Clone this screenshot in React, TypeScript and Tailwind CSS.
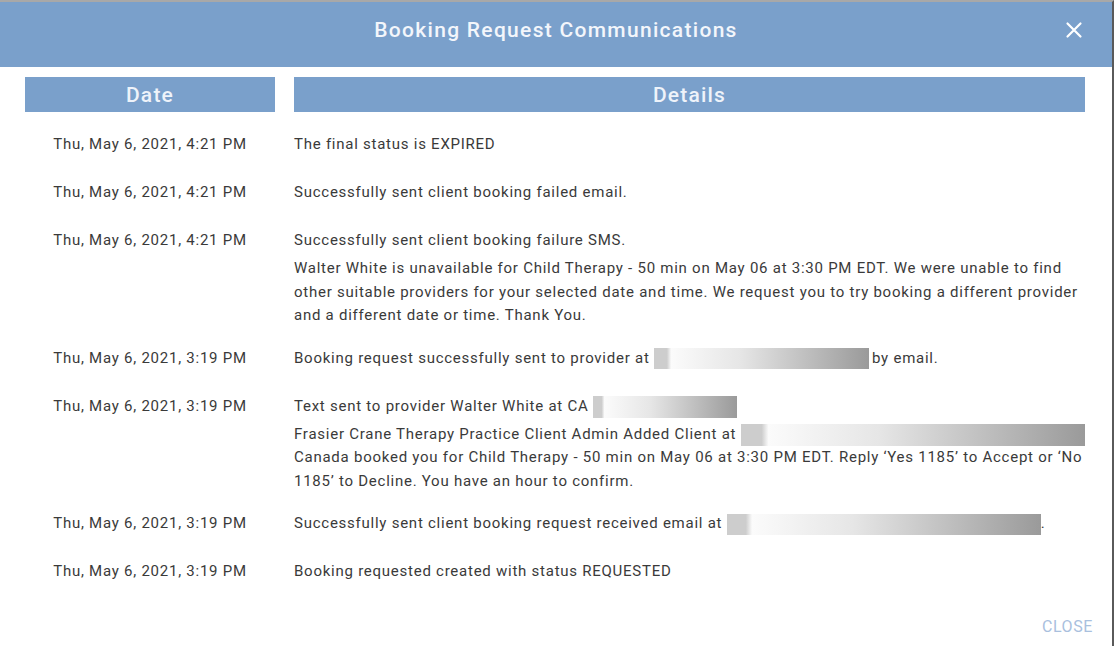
import { JSX } from 'react'

type Row = {
  date: string
  detail: JSX.Element | string
  extra?: JSX.Element
}

function Redacted({ width, height = 21 }: { width: number; height?: number }): JSX.Element {
  return (
    <span
      className="inline-block align-middle bg-[linear-gradient(90deg,#cdcdcd_0%,#cdcdcd_6%,#fbfbfb_8%,#e6e6e6_40%,#9a9a9a_100%)]"
      style={{ width, height }}
    />
  )
}

const rows: Row[] = [
  { date: 'Thu, May 6, 2021, 4:21 PM', detail: 'The final status is EXPIRED' },
  { date: 'Thu, May 6, 2021, 4:21 PM', detail: 'Successfully sent client booking failed email.' },
  {
    date: 'Thu, May 6, 2021, 4:21 PM',
    detail: 'Successfully sent client booking failure SMS.',
    extra: (
      <>
        Walter White is unavailable for Child Therapy - 50 min on May 06 at 3:30 PM EDT. We were unable to find
        <br />
        other suitable providers for your selected date and time. We request you to try booking a different provider
        <br />
        and a different date or time. Thank You.
      </>
    )
  },
  {
    date: 'Thu, May 6, 2021, 3:19 PM',
    detail: (
      <>
        Booking request successfully sent to provider at <Redacted width={215} />
        <span className="ml-[3px]">by email.</span>
      </>
    )
  },
  {
    date: 'Thu, May 6, 2021, 3:19 PM',
    detail: (
      <>
        Text sent to provider Walter White at CA <Redacted width={144} height={22} />
      </>
    ),
    extra: (
      <>
        Frasier Crane Therapy Practice Client Admin Added Client at <Redacted width={344} height={22} />
        <br />
        Canada booked you for Child Therapy - 50 min on May 06 at 3:30 PM EDT. Reply ‘Yes 1185’ to Accept or ‘No
        <br />
        1185’ to Decline. You have an hour to confirm.
      </>
    )
  },
  {
    date: 'Thu, May 6, 2021, 3:19 PM',
    detail: (
      <>
        Successfully sent client booking request received email at <Redacted width={314} />.
      </>
    )
  },
  { date: 'Thu, May 6, 2021, 3:19 PM', detail: 'Booking requested created with status REQUESTED' }
]

export default function App(): JSX.Element {
  return (
    <div className="w-[1115px] h-[646px] bg-white overflow-hidden font-['Roboto',_'Liberation_Sans',_sans-serif]">
      <div className="w-[1114px] h-full flex flex-col border-t-2 border-t-[#a8a8a8] border-r-2 border-r-[#5a5a5a]">
        <div className="relative h-[65px] shrink-0 bg-[#7aa0cb] flex items-center justify-center pb-[7px]">
          <h1 className="text-[21px] font-medium text-[#f3f6fb] tracking-[1.3px]">Booking Request Communications</h1>
          <button className="absolute right-[29px] top-[19px] text-white" aria-label="Close">
            <svg width="18" height="18" viewBox="0 0 18 18" fill="none" stroke="currentColor" strokeWidth="2.2" strokeLinecap="round">
              <path d="M2.5 2.5L15.5 15.5M15.5 2.5L2.5 15.5" />
            </svg>
          </button>
        </div>

        <div className="flex-1 px-[25px] pt-[10px] flex flex-col">
          <div className="flex gap-[19px]">
            <div className="w-[250px] h-[35px] bg-[#7aa0cb] flex items-center justify-center pt-[2px] text-[21px] font-medium text-[#eef3fa] tracking-[1.2px]">
              Date
            </div>
            <div className="w-[791px] h-[35px] bg-[#7aa0cb] flex items-center justify-center pt-[2px] text-[21px] font-medium text-[#eef3fa] tracking-[1.2px]">
              Details
            </div>
          </div>

          <div className="mt-[8px] text-[15px] text-[#3a3a3a] tracking-[0.75px]">
            {rows.map((row, i) => (
              <div key={i} className={`flex gap-[19px] pt-3 ${row.extra ? 'pb-[6px]' : 'pb-3'}`}>
                <div className="w-[250px] text-center leading-6">{row.date}</div>
                <div className="w-[791px]">
                  <p className="leading-6">{row.detail}</p>
                  {row.extra && <p className="mt-[5px] leading-[23.5px]">{row.extra}</p>}
                </div>
              </div>
            ))}
          </div>

          <div className="mt-auto mb-[7px] flex justify-end">
            <button className="text-[16px] text-[#a9c0de] tracking-[0.6px] mr-[-6px]">CLOSE</button>
          </div>
        </div>
      </div>
    </div>
  )
}
